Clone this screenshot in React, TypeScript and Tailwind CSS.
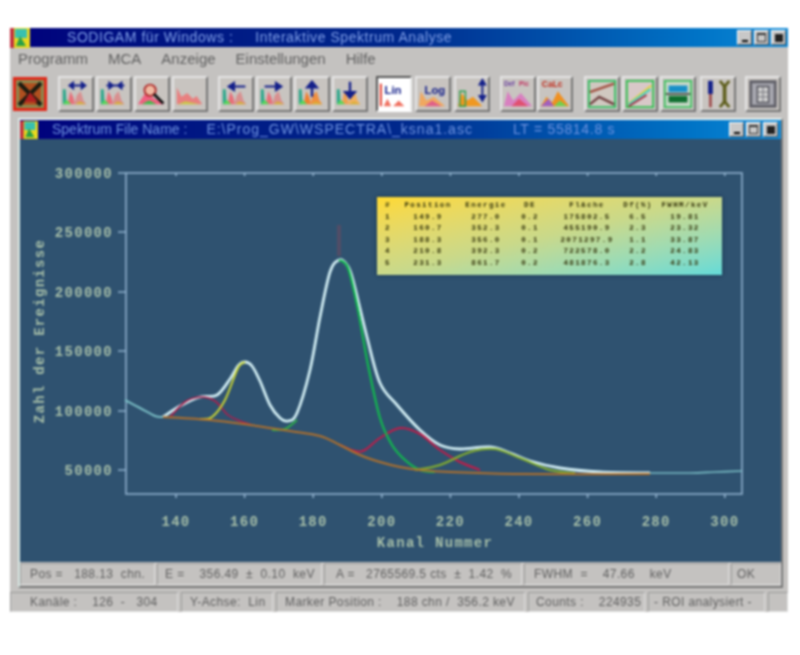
import React from "react";

type Pt = [number, number];

// Catmull-Rom through the points, good enough for spectrum curves
function smooth(pts: Pt[]) {
  let d = `M${pts[0][0]} ${pts[0][1]}`;
  for (let i = 0; i < pts.length - 1; i++) {
    const p0 = pts[i - 1] || pts[i];
    const p1 = pts[i];
    const p2 = pts[i + 1];
    const p3 = pts[i + 2] || p2;
    const c1x = p1[0] + (p2[0] - p0[0]) / 6;
    const c1y = p1[1] + (p2[1] - p0[1]) / 6;
    const c2x = p2[0] - (p3[0] - p1[0]) / 6;
    const c2y = p2[1] - (p3[1] - p1[1]) / 6;
    d += ` C${c1x} ${c1y} ${c2x} ${c2y} ${p2[0]} ${p2[1]}`;
  }
  return d;
}

const total: Pt[] = [
  [163, 417], [180, 406], [200, 397], [217, 395], [230, 379], [238, 366], [245, 362], [252, 366], [260, 381], [270, 405],
  [280, 418], [288, 421], [297, 413], [310, 370], [320, 317], [330, 272], [339, 260], [347, 265], [353, 280], [367, 337], [380, 383],
  [397, 405], [420, 430], [440, 445], [460, 449], [490, 447], [510, 453], [530, 461], [560, 468],
  [600, 472], [650, 473],
];
const lead: Pt[] = [[125, 400], [140, 408], [155, 416], [163, 417]];
const tail: Pt[] = [[650, 473], [690, 473], [715, 472], [742, 471]];
const base: Pt[] = [
  [163, 417], [210, 420], [250, 425], [290, 431], [320, 436], [340, 445], [360, 455], [380, 462],
  [400, 467], [420, 470], [450, 472], [520, 474], [650, 474],
];
const peak1: Pt[] = [[170, 417], [185, 402], [200, 397], [215, 401], [228, 415], [240, 421], [252, 425]];
const peak2: Pt[] = [[200, 419], [212, 417], [225, 400], [238, 368], [245, 362]];
const peak3: Pt[] = [[272, 430], [285, 429], [297, 420], [310, 372], [320, 318], [330, 272], [339, 260], [348, 268], [358, 310], [368, 365], [380, 418], [392, 445], [405, 460], [420, 470], [435, 472]];
const peak4: Pt[] = [[340, 445], [355, 451], [365, 450], [380, 438], [400, 428], [420, 434], [440, 450], [460, 462], [480, 470]];
const peak5: Pt[] = [[415, 470], [440, 465], [470, 452], [495, 449], [520, 458], [550, 470], [575, 473]];

const yTicks = [
  { label: "300000", y: 173 },
  { label: "250000", y: 232 },
  { label: "200000", y: 292 },
  { label: "150000", y: 351 },
  { label: "100000", y: 411 },
  { label: "50000", y: 470 },
];
const xTicks = [140, 160, 180, 200, 220, 240, 260, 280, 300];

const rows = [
  ["#", "Position", "Energie", "DE", "Fläche", "Df(%)", "FWHM/keV"],
  ["1", "149.9", "277.0", "0.2", "175802.5", "6.5", "19.81"],
  ["2", "160.7", "352.3", "0.1", "455190.9", "2.3", "23.32"],
  ["3", "188.3", "356.0", "0.1", "2071297.9", "1.1", "33.87"],
  ["4", "210.8", "392.3", "0.2", "722578.0", "2.2", "24.83"],
  ["5", "231.3", "861.7", "0.2", "481876.3", "2.8", "42.13"],
];

const frame = "#8fb0cc";
const label = "#a6bea8";
const mono = "'Liberation Mono', monospace";

function Spectrum() {
  return (
    <svg width="761" height="423" viewBox="20 139 761 423" className="block">
      <rect x="126" y="173" width="616" height="321" fill="none" stroke={frame} strokeWidth="1.6" />
      {yTicks.map((t) => (
        <g key={t.label}>
          <line x1="118" x2="126" y1={t.y} y2={t.y} stroke={frame} strokeWidth="1.5" />
          <text x="113" y={t.y + 5} textAnchor="end" fill={label} fontFamily={mono} fontSize="14" fontWeight="700" letterSpacing="1.3">
            {t.label}
          </text>
        </g>
      ))}
      {xTicks.map((v) => {
        const x = 176 + (v - 140) * 3.43;
        return (
          <g key={v}>
            <line x1={x} x2={x} y1="494" y2="498" stroke={frame} strokeWidth="1.6" />
            <line x1={x} x2={x} y1="173" y2="176" stroke={frame} strokeWidth="1.6" />
            <text x={x} y="526" textAnchor="middle" fill={label} fontFamily={mono} fontSize="14" fontWeight="700" letterSpacing="1.3">
              {v}
            </text>
          </g>
        );
      })}
      <text x="435" y="547" textAnchor="middle" fill={label} fontFamily={mono} fontSize="14" fontWeight="700" letterSpacing="1.3">
        Kanal Nummer
      </text>
      <text
        transform="translate(44 331) rotate(-90)"
        textAnchor="middle"
        fill={label}
        fontFamily={mono}
        fontSize="14"
        fontWeight="700"
        letterSpacing="1.3"
      >
        Zahl der Ereignisse
      </text>
      <line x1="339" x2="339" y1="225" y2="256" stroke="#6a4a60" strokeWidth="4" opacity="0.6" />
      <path d={smooth(lead)} fill="none" stroke="#79bcc4" strokeWidth="2" />
      <path d={smooth(tail)} fill="none" stroke="#79bcc4" strokeWidth="1.6" />
      <path d={smooth(total)} fill="none" stroke="#d0ecf2" strokeWidth="2.8" />
      <path d={smooth(peak1)} fill="none" stroke="#b01e4a" strokeWidth="1.6" />
      <path d={smooth(peak4)} fill="none" stroke="#c01c48" strokeWidth="2" />
      <path d={smooth(peak2)} fill="none" stroke="#c9d435" strokeWidth="2" />
      <path d={smooth(peak3.slice(6))} fill="none" stroke="#12b84e" strokeWidth="2.2" />
      <path d={smooth(peak3.slice(0, 3))} fill="none" stroke="#2fae4a" strokeWidth="2" />
      <path d={smooth(peak5)} fill="none" stroke="#86b02c" strokeWidth="2" />
      <path d={smooth(base)} fill="none" stroke="#b0702c" strokeWidth="2" />
    </svg>
  );
}

function PeakTable() {
  return (
    <div className="absolute left-[357px] top-[58px] w-[345px] h-[78px] bg-gradient-to-br from-[#ffd92e] via-[#c9d98a] to-[#62dbd8] py-[3px] text-[#33330c] font-['Liberation_Mono',monospace] font-bold text-[7.5px] tracking-[1.4px] leading-[11.5px] shadow-[0_0_4px_#17324a]">
      {rows.map((r) => (
        <div key={r[0]} className="grid grid-cols-[22px_58px_58px_30px_76px_34px_60px] text-center whitespace-nowrap">
          {r.map((c, i) => (
            <span key={i} className={i === 4 ? "pl-2" : i === 5 ? "-ml-2 -mr-2" : ""}>
              {c}
            </span>
          ))}
        </div>
      ))}
    </div>
  );
}

function Bars({ a, b }: { a: string; b: string }) {
  return (
    <>
      <path d="M3 28 L3 12 L6 12 L7 28Z" fill="#2fa88c" />
      <path d="M8 28 L11 14 L14 20 L16 28Z" fill={a} />
      <path d="M15 28 L18 18 L22 14 L25 24 L28 28Z" fill={b} />
      <path d="M3 28 L7 23 L12 28Z" fill="#58d858" />
      <path d="M16 28 L21 25 L28 28Z" fill="#d8b030" />
    </>
  );
}

function ToolGlyph({ kind }: { kind: string }) {
  const navy = "#14208a";
  switch (kind) {
    case "both":
      return (
        <>
          <Bars a="#e8707a" b="#d89090" />
          <path d="M10 8H27M10 8l4-3v6zM27 8l-4-3v6z" fill={navy} stroke={navy} strokeWidth="2" />
        </>
      );
    case "in":
      return (
        <>
          <Bars a="#e8707a" b="#d89090" />
          <path d="M9 8H28M16 8l-4-3v6zM21 8l4-3v6z" fill={navy} stroke={navy} strokeWidth="2" />
        </>
      );
    case "zoom":
      return (
        <>
          <path d="M2 28 L10 16 L20 22 L30 28Z" fill="#f06080" />
          <path d="M6 28 L14 24 L22 28Z" fill="#38c048" />
          <circle cx="15" cy="13" r="6" fill="#f0b8a0" stroke="#b03030" strokeWidth="2" />
          <path d="M19 17 L29 27" stroke="#111" strokeWidth="3" />
        </>
      );
    case "plain":
      return (
        <>
          <path d="M3 28 L3 10 L8 20 L14 16 L20 22 L24 19 L30 28Z" fill="#e88080" />
          <path d="M4 28 L12 25 L28 28Z" fill="#c8d040" />
        </>
      );
    case "left":
      return (
        <>
          <Bars a="#e8707a" b="#d89090" />
          <path d="M9 9H27M9 9l6-4v8z" fill={navy} stroke={navy} strokeWidth="2" />
        </>
      );
    case "right":
      return (
        <>
          <Bars a="#e8707a" b="#d89090" />
          <path d="M7 9H25M25 9l-6-4v8z" fill={navy} stroke={navy} strokeWidth="2" />
        </>
      );
    case "up":
      return (
        <>
          <Bars a="#f08030" b="#f09040" />
          <path d="M17 20V6M17 4l-5 6h10z" fill={navy} stroke={navy} strokeWidth="2.5" />
        </>
      );
    case "down":
      return (
        <>
          <Bars a="#f0a050" b="#f0b060" />
          <path d="M17 4V16M17 21l-5-6h10z" fill={navy} stroke={navy} strokeWidth="2.5" />
        </>
      );
    case "lin":
      return (
        <>
          <path d="M3 6V30" stroke="#e03020" strokeWidth="2" />
          <path d="M6 30 L10 22 L14 30Z M16 30 L22 24 L28 30Z" fill="#f07060" />
          <text x="7" y="17" fontSize="12" fontWeight="700" fill="#14208a" fontFamily="'Liberation Sans', sans-serif">
            Lin
          </text>
        </>
      );
    case "log":
      return (
        <>
          <path d="M2 30 L4 14 L10 24 L18 20 L30 30Z" fill="#f0a860" />
          <path d="M8 30 L16 24 L26 30Z" fill="#e06088" />
          <text x="8" y="17" fontSize="12" fontWeight="700" fill="#14208a" fontFamily="'Liberation Sans', sans-serif">
            Log
          </text>
        </>
      );
    case "scale":
      return (
        <>
          <path d="M2 30 L6 16 L12 24 L18 20 L28 30Z" fill="#f09820" />
          <path d="M4 14H10V30H4Z" fill="none" stroke="#30a050" strokeWidth="1.5" />
          <path d="M28 4V20M28 2l-3 5h6zM28 24l-3-5h6z" fill={navy} stroke={navy} strokeWidth="2" />
        </>
      );
    case "def":
      return (
        <>
          <path d="M2 30 L6 14 L12 24 L20 16 L32 30Z" fill="#d880c0" />
          <path d="M10 30 L18 22 L28 30Z" fill="#e05070" />
          <text x="2" y="9" fontSize="7" fontWeight="700" fill="#6a40a0" fontFamily="'Liberation Sans', sans-serif">
            Def
          </text>
          <text x="18" y="9" fontSize="7" fontWeight="700" fill="#c03060" fontFamily="'Liberation Sans', sans-serif">
            Pic
          </text>
        </>
      );
    case "calc":
      return (
        <>
          <path d="M2 30 L8 20 L14 26 L20 14 L32 30Z" fill="#f09020" />
          <path d="M2 30 L10 22 L16 30Z" fill="#a060c0" />
          <path d="M16 30 L22 24 L30 30Z" fill="#70d050" />
          <text x="3" y="10" fontSize="9" fontWeight="700" fill="#c02818" fontFamily="'Liberation Sans', sans-serif">
            CaLc
          </text>
        </>
      );
    case "curve1":
      return (
        <>
          <path d="M3 3H31V31H3Z" fill="#d0c8c0" stroke="#30c060" strokeWidth="2" />
          <path d="M4 15 L30 6" stroke="#a05040" strokeWidth="2.5" />
          <path d="M4 28 L14 20 L30 28" stroke="#704040" strokeWidth="2.5" fill="none" />
        </>
      );
    case "curve2":
      return (
        <>
          <path d="M3 3H31V31H3Z" fill="#d8c8c8" stroke="#30c050" strokeWidth="2" />
          <path d="M5 27 L29 8" stroke="#e8d040" strokeWidth="2" />
          <path d="M5 28 L28 12" stroke="#50d0c0" strokeWidth="2.5" />
          <path d="M5 30 L24 18" stroke="#a03040" strokeWidth="2" />
        </>
      );
    case "lists":
      return (
        <>
          <path d="M3 3H31V31H3Z" fill="#c8d8c8" stroke="#40c060" strokeWidth="2" />
          <path d="M7 8H27V15H7Z" fill="#1890c8" />
          <path d="M7 19H27V26H7Z" fill="#107030" />
          <path d="M4 17H30" stroke="#222" strokeWidth="1.5" />
        </>
      );
    case "tools":
      return (
        <>
          <path d="M9 3V17" stroke="#14208a" strokeWidth="5" />
          <path d="M9 17V31" stroke="#a05050" strokeWidth="3" />
          <path d="M24 8V26" stroke="#606020" strokeWidth="4" />
          <path d="M19 3 L24 9 L29 3M19 31 L24 25 L29 31" stroke="#606020" strokeWidth="3" fill="none" />
        </>
      );
    default:
      return (
        <>
          <path d="M4 4H30V30H4Z" fill="#a8a8b0" stroke="#606068" strokeWidth="3" />
          <path d="M11 9H23V26H11Z" fill="#d0d0d0" stroke="#505058" strokeWidth="1.5" />
          <path d="M17 9V26M11 15H23M11 20H23" stroke="#707078" strokeWidth="1" />
        </>
      );
  }
}

function ToolButton({ kind, pressed, w = "w-[36px]" }: { kind: string; pressed?: boolean; w?: string }) {
  return (
    <div
      className={`${w} h-[36px] flex items-center justify-center border-2 ${
        pressed
          ? "bg-white border-t-[#555] border-l-[#555] border-b-white border-r-[#eee]"
          : "bg-[#c8c4c0] border-t-[#e4e4e4] border-l-[#e4e4e4] border-b-[#777] border-r-[#777]"
      }`}
    >
      <svg width="32" height="32" viewBox="0 0 34 34">
        <ToolGlyph kind={kind} />
      </svg>
    </div>
  );
}

function AppIcon({ size }: { size: number }) {
  return (
    <svg width={size} height={size} viewBox="0 0 20 20" className="shrink-0">
      <rect width="20" height="20" fill="#e8d820" />
      <rect x="0" y="0" width="4" height="20" fill="#c03040" />
      <rect x="5" y="1" width="12" height="9" fill="#38c0b0" />
      <path d="M6 18 L10 8 L16 18Z" fill="#28a048" />
    </svg>
  );
}

function WinButtons({ size }: { size: string }) {
  return (
    <div className="flex gap-[2px] ml-auto">
      {["min", "max", "close"].map((b) => (
        <div
          key={b}
          className={`${size} bg-[#c8c8c8] border border-t-white border-l-white border-b-[#555] border-r-[#555] flex items-center justify-center`}
        >
          {b === "min" && <div className="w-[6px] h-[2px] bg-black mt-[7px]" />}
          {b === "max" && <div className="w-[9px] h-[9px] border border-[#333] border-t-2" />}
          {b === "close" && <div className="w-[8px] h-[8px] bg-[#222]" />}
        </div>
      ))}
    </div>
  );
}

function Cell({ className, children }: { className: string; children: React.ReactNode }) {
  return (
    <div className={`${className} h-full flex items-center border border-t-[#9a9a9a] border-l-[#9a9a9a] border-b-[#dedede] border-r-[#dedede] whitespace-pre text-[12px] tracking-[0.4px] text-[#606060]`}>
      {children}
    </div>
  );
}

const menu = ["Programm", "MCA", "Anzeige", "Einstellungen", "Hilfe"];

export default function App() {
  return (
    <div className="w-[800px] h-[655px] bg-white pt-[28px] pl-[10px] font-['Liberation_Sans',Arial,sans-serif] overflow-hidden blur-[0.9px]">
      <div className="w-[778px] h-[584px] bg-[#c4c2c0] flex flex-col">
        {/* main title */}
        <div className="h-[19px] flex items-center bg-gradient-to-r from-[#00007c] via-[#00288c] to-[#0f8ad8] text-[#7f9fe8] text-[14px] tracking-[0.55px] shrink-0">
          <AppIcon size={20} />
          <span className="ml-[37px]">SODIGAM für Windows :</span>
          <span className="ml-[22px]">Interaktive Spektrum Analyse</span>
          <WinButtons size="w-[15px] h-[15px]" />
          <div className="w-[2px]" />
        </div>

        {/* menu */}
        <div className="h-[25px] flex items-center gap-[20px] pl-[8px] text-[15px] text-[#606060] shrink-0">
          {menu.map((m) => (
            <span key={m}>{m}</span>
          ))}
        </div>

        {/* toolbar */}
        <div className="h-[44px] flex items-center pl-[3px] shrink-0">
          <div className="w-[34px] h-[34px] bg-[#e02818] p-[3px]">
            <svg width="28" height="28" viewBox="0 0 28 28" className="bg-[#8a8a50]">
              <path d="M3 3H25V25H3Z" fill="#b05020" />
              <path d="M3 3L25 25M25 3L3 25" stroke="#1a1a10" strokeWidth="4" />
              <path d="M8 22 L14 12 L22 22Z" fill="#b02020" />
            </svg>
          </div>
          <div className="flex gap-[2px] ml-[11px]">
            <ToolButton kind="both" />
            <ToolButton kind="in" />
            <ToolButton kind="zoom" />
            <ToolButton kind="plain" />
          </div>
          <div className="flex gap-[2px] ml-[10px]">
            <ToolButton kind="left" />
            <ToolButton kind="right" />
            <ToolButton kind="up" />
            <ToolButton kind="down" />
          </div>
          <div className="flex gap-[3px] ml-[8px]">
            <ToolButton kind="lin" pressed />
            <ToolButton kind="log" />
            <ToolButton kind="scale" />
          </div>
          <div className="flex gap-[1px] ml-[10px]">
            <ToolButton kind="def" />
            <ToolButton kind="calc" />
          </div>
          <div className="flex gap-[2px] ml-[11px]">
            <ToolButton kind="curve1" />
            <ToolButton kind="curve2" />
            <ToolButton kind="lists" />
            <ToolButton kind="tools" w="w-[36px] ml-[2px]" />
          </div>
          <div className="ml-[9px]">
            <ToolButton kind="panel" />
          </div>
        </div>

        {/* child window */}
        <div className="ml-[8px] mt-[2px] w-[765px] h-[470px] bg-[#c4c2c0] border-2 border-t-[#e8f0ee] border-l-[#d8e8e4] border-r-[#777] border-b-[#777] flex flex-col shrink-0">
          <div className="h-[19px] flex items-center bg-gradient-to-r from-[#00007c] via-[#00288c] to-[#0f8ad8] text-[#6f93e0] text-[14px] shrink-0">
            <AppIcon size={18} />
            <span className="ml-[14px]">Spektrum File Name :</span>
            <span className="ml-[19px] tracking-[1px]">E:\Prog_GW\WSPECTRA\_ksna1.asc</span>
            <span className="ml-[40px] tracking-[0.7px]">LT = 55814.8 s</span>
            <WinButtons size="w-[15px] h-[15px]" />
            <div className="w-[3px]" />
          </div>
          <div className="relative h-[423px] bg-[#2f5270] shrink-0">
            <Spectrum />
            <PeakTable />
          </div>
          <div className="h-[24px] flex items-stretch gap-[2px] py-[1px] shrink-0">
            <Cell className="w-[135px] pl-[9px]">{"Pos =   188.13  chn."}</Cell>
            <Cell className="w-[165px] pl-[7px]">{"E =    356.49  ±  0.10  keV"}</Cell>
            <Cell className="w-[198px] pl-[11px]">{"A =   2765569.5 cts  ±  1.42  %"}</Cell>
            <Cell className="w-[205px] pl-[9px]">{"FWHM  =    47.66    keV"}</Cell>
            <Cell className="flex-1 pl-[5px]">OK</Cell>
          </div>
        </div>

        {/* bottom status */}
        <div className="h-[20px] mt-[4px] flex items-stretch gap-[3px] shrink-0">
          <Cell className="w-[168px] pl-[19px]">{"Kanäle :    126  -   304"}</Cell>
          <Cell className="w-[92px] pl-[8px]">{"Y-Achse:  Lin"}</Cell>
          <Cell className="w-[249px] pl-[8px]">{"Marker Position :    188 chn /  356.2 keV"}</Cell>
          <Cell className="w-[117px] pl-[7px]">{"Counts :    224935"}</Cell>
          <Cell className="w-[117px] pl-[5px]">- ROI analysiert -</Cell>
          <Cell className="flex-1"> </Cell>
        </div>
      </div>
    </div>
  );
}
